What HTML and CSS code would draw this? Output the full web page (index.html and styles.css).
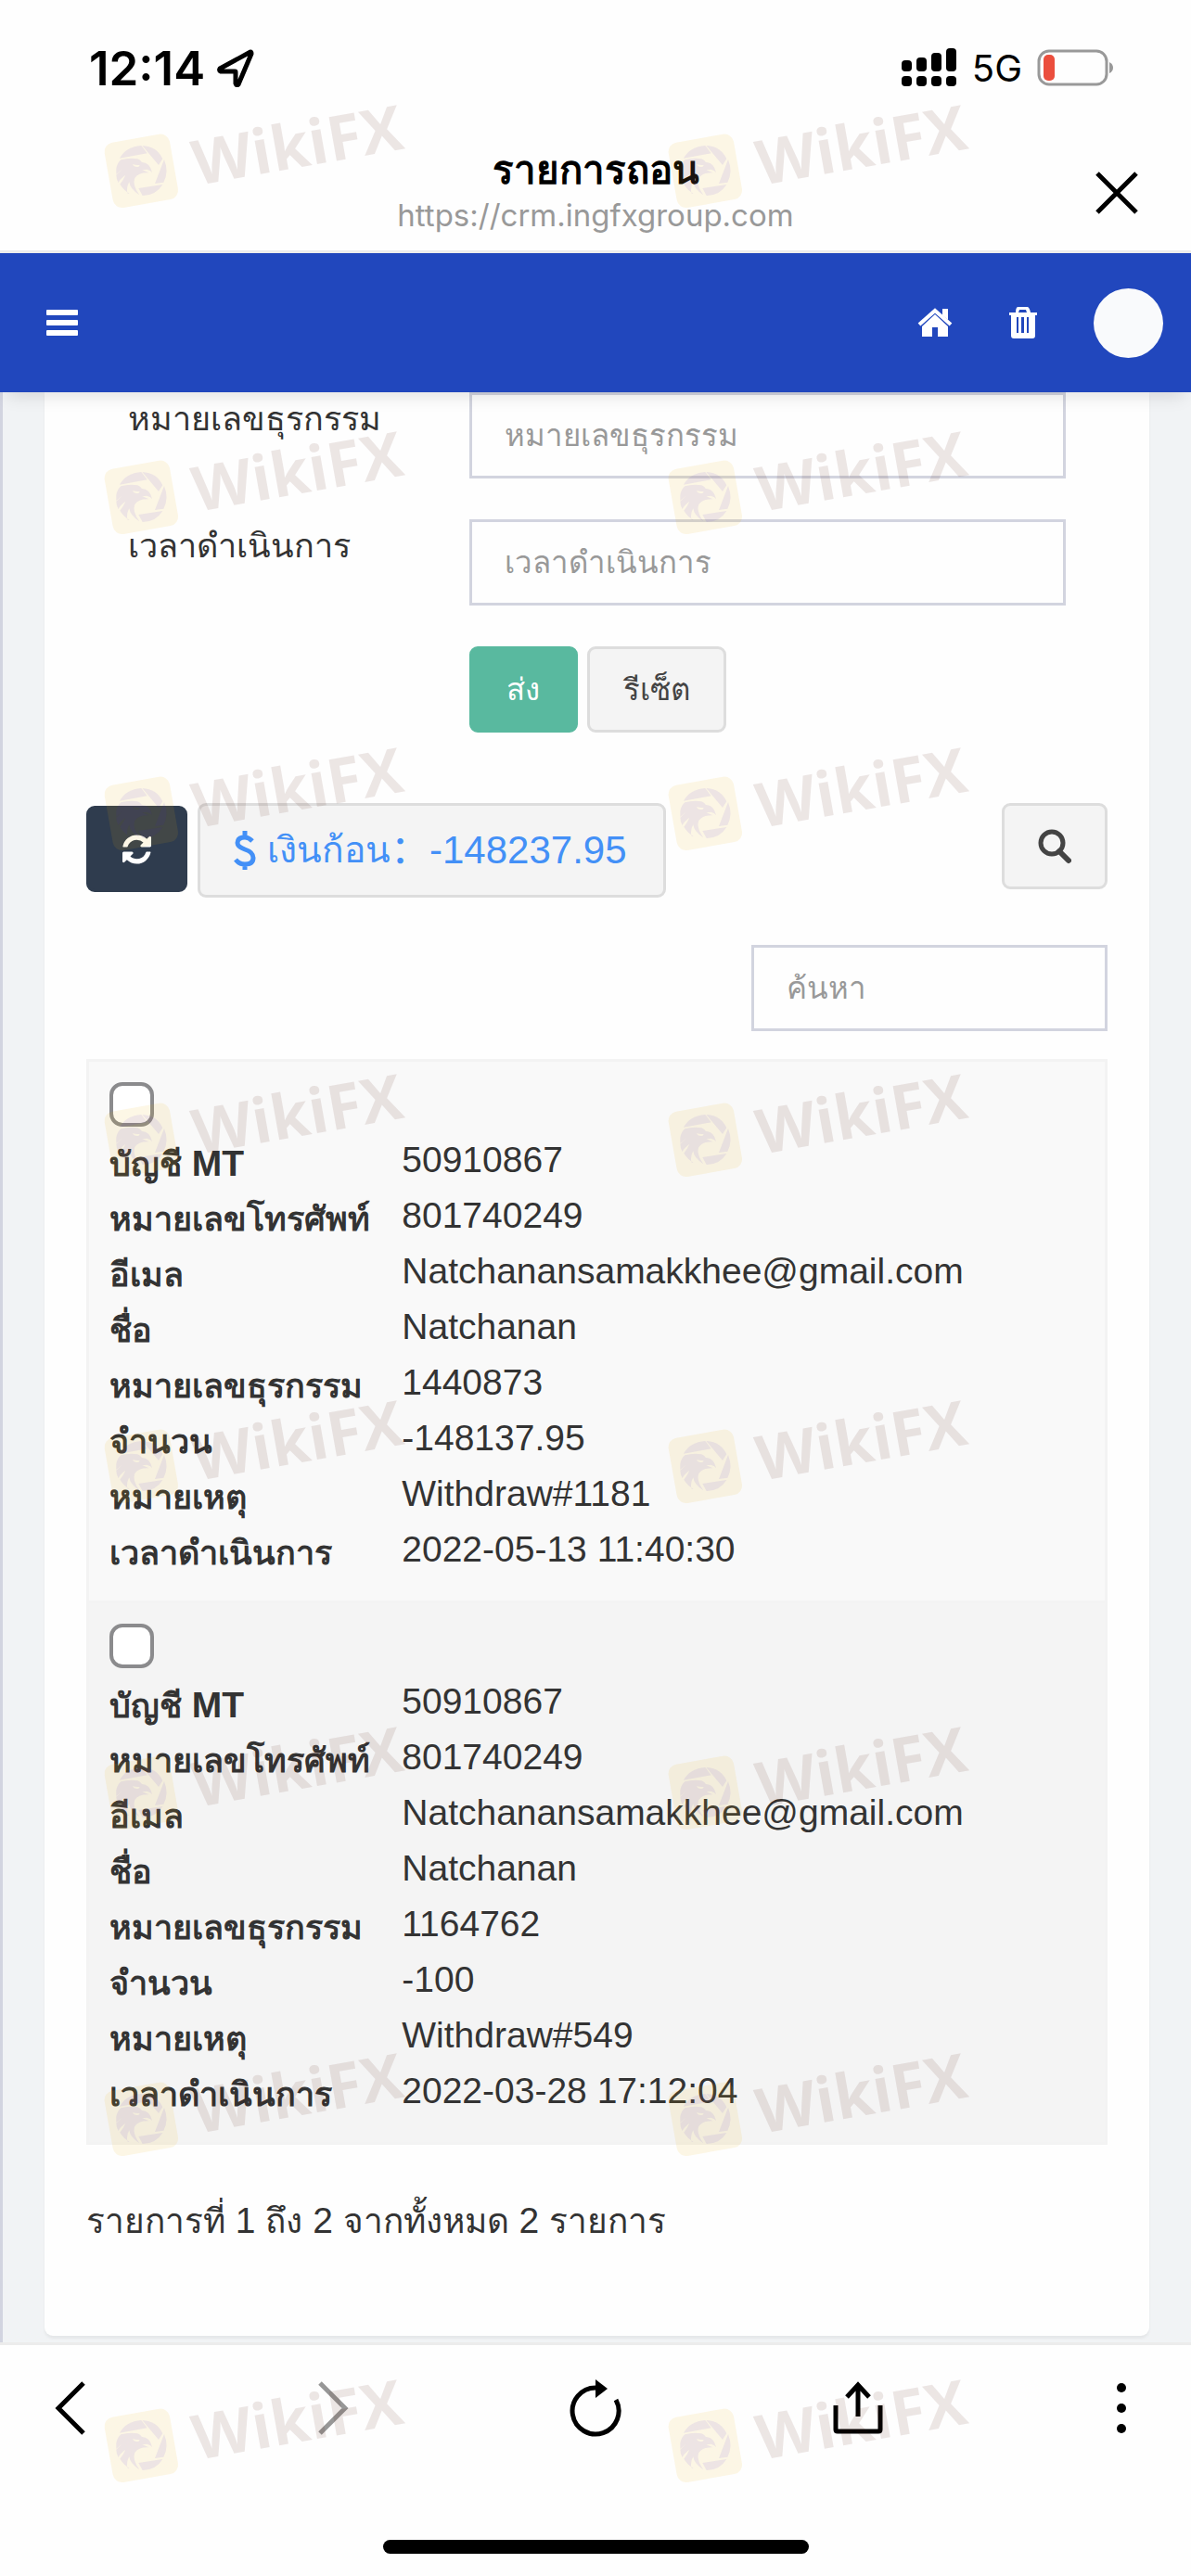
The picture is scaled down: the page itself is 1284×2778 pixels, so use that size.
FILE: index.html
```html
<!DOCTYPE html>
<html lang="th">
<head>
<meta charset="utf-8">
<meta name="viewport" content="width=device-width, initial-scale=1">
<title>รายการถอน</title>
<link rel="stylesheet" href="styles.css">
</head>
<body>
<svg class="defs" aria-hidden="true">
  <symbol id="badge" viewBox="0 0 350 140">
    <g transform="translate(10 36) scale(.3333)">
      <rect class="mark-badge" x="20" y="38" width="214" height="214" rx="30" transform="rotate(-10 127 145)"/>
      <g class="mark-bird">
        <path d="M57 104Q78 66 127 63L146 88Z"/>
        <path d="M130 63Q178 66 196 106L183 126Z"/>
        <path d="M201 108Q217 148 199 182L171 186Z"/>
        <path d="M196 189Q174 225 131 225L118 201Z"/>
        <path fill-rule="evenodd" d="M46 137Q50 118 61 109Q88 101 115 106Q124 109 129 117Q155 118 162 150Q157 142 145 140L130 142L152 151Q118 149 106 168Q97 190 121 223Q90 203 88 181Q77 200 83 218L89 218Q70 208 58 188Q70 172 76 158Q55 174 53 184Q46 170 46 158L66 139L46 156ZM99 123Q103 134 119 131L122 126Q108 127 99 123Z"/>
      </g>
    </g>
  </symbol>
</svg>

<div class="status">
  <span class="clock">12:14</span>
  <svg class="arrow" width="42" height="42" viewBox="0 0 42 42"><path d="M37 4 4 22q-1 2 1 3h15q1 0 1 1v12q1 3 3 1L38 6q0-2-1-2Z"/></svg>
  <div class="status-right">
    <svg width="60" height="42" viewBox="0 0 60 42">
      <rect x="0" y="13" width="11" height="12" rx="4"/><rect x="16" y="10" width="11" height="15" rx="4"/><rect x="32" y="5" width="11" height="20" rx="4"/><rect x="48" y="0" width="11" height="25" rx="4"/>
      <rect x="0" y="30" width="11" height="11" rx="4"/><rect x="16" y="30" width="11" height="11" rx="4"/><rect x="32" y="30" width="11" height="11" rx="4"/><rect x="48" y="30" width="11" height="11" rx="4"/>
    </svg>
    <span class="network">5G</span>
    <svg width="82" height="40" viewBox="0 0 82 40"><rect x="2" y="2" width="73" height="36" rx="11" fill="none" stroke="#999" stroke-width="3"/><rect x="7" y="6" width="12" height="28" rx="5" fill="#eb4e3d"/><path d="M78 14q4 2 4 6t-4 6Z" fill="#999"/></svg>
  </div>
</div>

<header class="browser-head">
  <div class="page-id">
    <h1>รายการถอน</h1>
    <p>https://crm.ingfxgroup.com</p>
  </div>
  <button class="close" type="button" aria-label="Close"><svg width="48" height="48" viewBox="0 0 48 48"><path d="M3 3 45 45M45 3 3 45" fill="none" stroke="#000" stroke-width="5"/></svg></button>
</header>

<nav class="appbar">
  <button type="button" aria-label="Menu"><svg width="34" height="28" viewBox="0 0 34 28"><rect width="34" height="6" rx="1"/><rect y="11" width="34" height="6" rx="1"/><rect y="22" width="34" height="6" rx="1"/></svg></button>
  <div class="appbar-right">
    <a href="#home" aria-label="Home"><svg width="38" height="32" viewBox="0 0 38 32"><path d="M19 7 33 20v11H22V21h-6v10H5V20Z"/><path d="M2 18 19 3 36 18" fill="none" stroke="#fff" stroke-width="4"/><path d="M27 1h6v12l-6-5Z"/></svg></a>
    <button type="button" aria-label="Trash"><svg width="32" height="34" viewBox="0 0 32 34"><path fill-rule="evenodd" d="M10 0h11q2 1 3 6h7v3h-2v22q0 3-3 3H6q-3 0-3-3V9H1V6h7q0-5 2-6Zm1 6h9l-1-3h-7ZM9 11v17h2V11Zm5 0v17h3V11Zm6 0v17h2V11Z"/></svg></button>
    <span class="avatar"></span>
  </div>
</nav>

<main>
  <section class="card">
    <form class="filter">
      <label for="txn">หมายเลขธุรกรรม</label>
      <input id="txn" type="text" placeholder="หมายเลขธุรกรรม">
      <label for="time">เวลาดำเนินการ</label>
      <input id="time" type="text" placeholder="เวลาดำเนินการ">
      <div class="actions">
        <button class="btn submit" type="submit">ส่ง</button>
        <button class="btn" type="reset">รีเซ็ต</button>
      </div>
    </form>

    <div class="tools">
      <button class="btn refresh" type="button" aria-label="Refresh"><svg width="31" height="36" viewBox="128 128 1536 1536"><path d="M1639 1056q0 5-1 7-64 268-268 434.500t-478 166.500q-146 0-282.500-55t-243.500-157l-129 129q-19 19-45 19t-45-19-19-45v-448q0-26 19-45t45-19h448q26 0 45 19t19 45-19 45l-137 137q71 66 161 102t187 36q134 0 250-65t186-179q11-17 53-117 8-23 30-23h192q13 0 22.500 9.500t9.500 22.500zm25-800v448q0 26-19 45t-45 19h-448q-26 0-45-19t-19-45 19-45l138-138q-148-137-349-137-134 0-250 65t-186 179q-11 17-53 117-8 23-30 23h-199q-13 0-22.500-9.500t-9.500-22.500v-7q65-268 270-434.500t480-166.500q146 0 284 55.500t245 156.500l130-129q19-19 45-19t45 19 19 45z"/></svg></button>
      <button class="btn balance" type="button"><svg width="24" height="42" viewBox="0 0 24 42"><path d="M20 11Q16 7 12 7q-8 0-8 6 0 4 8 7 9 3 9 9 0 7-9 7-6 0-10-5M12 0v7M12 35v7" fill="none" stroke="#4390f7" stroke-width="5"/></svg><span>เงินก้อน</span><span class="amount">：-148237.95</span></button>
      <button class="btn search" type="button" aria-label="Search"><svg width="36" height="38" viewBox="0 0 36 38"><circle cx="15" cy="15" r="12" fill="none" stroke="#444" stroke-width="5"/><path d="m23 24 10 10" stroke="#444" stroke-width="6" stroke-linecap="round"/></svg></button>
    </div>
    <input class="find" type="search" aria-label="ค้นหา" placeholder="ค้นหา">

    <table class="records">
      <tbody>
      <tr><td>
        <input type="checkbox" aria-label="50910867 1440873">
        <dl>
          <dt>บัญชี<span> MT</span></dt><dd>50910867</dd>
          <dt>หมายเลขโทรศัพท์</dt><dd>801740249</dd>
          <dt>อีเมล</dt><dd>Natchanansamakkhee@gmail.com</dd>
          <dt>ชื่อ</dt><dd>Natchanan</dd>
          <dt>หมายเลขธุรกรรม</dt><dd>1440873</dd>
          <dt>จำนวน</dt><dd>-148137.95</dd>
          <dt>หมายเหตุ</dt><dd>Withdraw#1181</dd>
          <dt>เวลาดำเนินการ</dt><dd>2022-05-13 11:40:30</dd>
        </dl>
      </td></tr>
      <tr><td>
        <input type="checkbox" aria-label="50910867 1164762">
        <dl>
          <dt>บัญชี<span> MT</span></dt><dd>50910867</dd>
          <dt>หมายเลขโทรศัพท์</dt><dd>801740249</dd>
          <dt>อีเมล</dt><dd>Natchanansamakkhee@gmail.com</dd>
          <dt>ชื่อ</dt><dd>Natchanan</dd>
          <dt>หมายเลขธุรกรรม</dt><dd>1164762</dd>
          <dt>จำนวน</dt><dd>-100</dd>
          <dt>หมายเหตุ</dt><dd>Withdraw#549</dd>
          <dt>เวลาดำเนินการ</dt><dd>2022-03-28 17:12:04</dd>
        </dl>
      </td></tr>
      </tbody>
    </table>
    <p class="summary">รายการที่<span> 1 </span>ถึง<span> 2 </span>จากทั้งหมด<span> 2 </span>รายการ</p>
  </section>
</main>

<footer class="browser-foot">
  <div class="controls">
    <button type="button" aria-label="Back"><svg width="64" height="64" viewBox="0 0 64 64"><path d="M46 4 19 31l27 27" /></svg></button>
    <button type="button" aria-label="Forward" disabled><svg width="64" height="64" viewBox="0 0 64 64"><path d="m18 4 27 27-27 27"/></svg></button>
    <button type="button" aria-label="Reload"><svg width="64" height="64" viewBox="0 0 64 64"><path d="M32 9a25 25 0 1 0 22 13"/><path class="solid" d="M32 0v20l13-10Z"/></svg></button>
    <button type="button" aria-label="Share"><svg width="64" height="64" viewBox="0 0 64 64"><path d="M8 28v26q0 2 2 2h44q2 0 2-2V28M32 40V6M20 19 32 6l12 13"/></svg></button>
    <button type="button" aria-label="More"><svg width="64" height="64" viewBox="0 0 64 64"><circle class="solid" cx="33" cy="9" r="5"/><circle class="solid" cx="33" cy="31" r="5"/><circle class="solid" cx="33" cy="53" r="5"/></svg></button>
  </div>
  <div class="home-bar"></div>
</footer>

<div class="marks" aria-hidden="true">
  <svg viewBox="0 -60 400 240"><use href="#badge" width="350" height="140"/><text transform="translate(112 100) rotate(-10)">WikiFX</text></svg>
  <svg viewBox="0 -60 400 240"><use href="#badge" width="350" height="140"/><text transform="translate(112 100) rotate(-10)">WikiFX</text></svg>
  <svg viewBox="0 -60 400 240"><use href="#badge" width="350" height="140"/><text transform="translate(112 100) rotate(-10)">WikiFX</text></svg>
  <svg viewBox="0 -60 400 240"><use href="#badge" width="350" height="140"/><text transform="translate(112 100) rotate(-10)">WikiFX</text></svg>
  <svg viewBox="0 -60 400 240"><use href="#badge" width="350" height="140"/><text transform="translate(112 100) rotate(-10)">WikiFX</text></svg>
  <svg viewBox="0 -60 400 240"><use href="#badge" width="350" height="140"/><text transform="translate(112 100) rotate(-10)">WikiFX</text></svg>
  <svg viewBox="0 -60 400 240"><use href="#badge" width="350" height="140"/><text transform="translate(112 100) rotate(-10)">WikiFX</text></svg>
  <svg viewBox="0 -60 400 240"><use href="#badge" width="350" height="140"/><text transform="translate(112 100) rotate(-10)">WikiFX</text></svg>
  <svg viewBox="0 -60 400 240"><use href="#badge" width="350" height="140"/><text transform="translate(112 100) rotate(-10)">WikiFX</text></svg>
  <svg viewBox="0 -60 400 240"><use href="#badge" width="350" height="140"/><text transform="translate(112 100) rotate(-10)">WikiFX</text></svg>
  <svg viewBox="0 -60 400 240"><use href="#badge" width="350" height="140"/><text transform="translate(112 100) rotate(-10)">WikiFX</text></svg>
  <svg viewBox="0 -60 400 240"><use href="#badge" width="350" height="140"/><text transform="translate(112 100) rotate(-10)">WikiFX</text></svg>
  <svg viewBox="0 -60 400 240"><use href="#badge" width="350" height="140"/><text transform="translate(112 100) rotate(-10)">WikiFX</text></svg>
  <svg viewBox="0 -60 400 240"><use href="#badge" width="350" height="140"/><text transform="translate(112 100) rotate(-10)">WikiFX</text></svg>
  <svg viewBox="0 -60 400 240"><use href="#badge" width="350" height="140"/><text transform="translate(112 100) rotate(-10)">WikiFX</text></svg>
  <svg viewBox="0 -60 400 240"><use href="#badge" width="350" height="140"/><text transform="translate(112 100) rotate(-10)">WikiFX</text></svg>
</div>
</body>
</html>
```
FILE: styles.css
```css
* { box-sizing: border-box; }

body {
  margin: 0;
  position: relative;
  min-height: 100vh;
  display: flex;
  flex-direction: column;
  background: #fefefe;
  color: #333;
  font-family: "Liberation Sans", "Noto Sans CJK SC", sans-serif;
  font-size: 36px;
}

h1, p, dl, dd { margin: 0; }
svg { display: block; }
button { padding: 0; border: 0; background: none; font: inherit; color: inherit; }
.defs { position: absolute; width: 0; height: 0; }

/* Phone status bar */
.status {
  display: flex;
  align-items: center;
  height: 146px;
  padding: 0 84px 0 96px;
  color: #000;
  font-family: Inter, sans-serif;
}
.clock { font-size: 51px; font-weight: 600; }
.arrow { margin-left: 12px; fill: none; stroke: #000; stroke-width: 5; stroke-linejoin: round; }
.status-right { display: flex; align-items: center; gap: 16px; margin-left: auto; }
.network { font-size: 40px; }

/* Browser heading */
.browser-head {
  display: grid;
  grid-template-columns: 1fr auto 1fr;
  align-items: center;
  height: 127px;
  padding: 0 56px;
  border-bottom: 3px solid #ececec;
}
.page-id { grid-column: 2; text-align: center; }
.page-id h1 { color: #000; font-size: 42px; line-height: 48px; }
.page-id p { color: #999; font: 33px/48px Inter, sans-serif; }
.close { justify-self: end; }

/* Application bar */
.appbar {
  position: relative;
  display: flex;
  align-items: center;
  justify-content: space-between;
  height: 150px;
  padding: 0 30px 0 50px;
  background: #2147bd;
  box-shadow: 0 12px 18px -8px rgba(0, 0, 0, .12);
  fill: #fff;
}
.appbar-right { display: flex; align-items: center; }
.appbar-right button { margin: 0 60px; }
.avatar { width: 75px; height: 75px; border-radius: 50%; background: #f9fafc; }

main {
  flex: 1;
  padding: 0 45px 7px;
  border-left: 3px solid #d2d4e0;
  background: #f1f3f5;
}
.card {
  padding: 0 45px 93px;
  border-radius: 0 0 9px 9px;
  background: #fefefe;
  box-shadow: 0 3px 3px rgba(0, 0, 0, .05);
}

/* Filter form */
.filter {
  display: grid;
  grid-template-columns: 4fr 7fr;
  gap: 44px 0;
  padding: 0 45px;
}
.filter label { line-height: 58px; }
.filter input, .find {
  min-width: 0;
  height: 93px;
  padding: 0 35px;
  border: 3px solid #d2d4df;
  border-radius: 0;
  background: #fefefe;
  font: inherit;
  font-size: 33px;
}
::placeholder { color: #999; opacity: 1; }
.actions { grid-column: 2; display: flex; gap: 10px; }
.btn {
  height: 93px;
  padding: 0 36px;
  border: 3px solid #ddd;
  border-radius: 9px;
  background: #f4f4f4;
  color: #444;
  font-size: 33px;
  line-height: 60px;
}
.submit { min-width: 117px; border-color: #59b99f; background: #59b99f; color: #fff; }

/* Table toolbar */
.tools { display: flex; align-items: flex-start; gap: 11px; margin-top: 76px; }
.refresh { margin-top: 3px; border-color: #2f3c4e; background: #2f3c4e; fill: #fff; }
.balance {
  display: flex;
  align-items: center;
  min-width: 505px;
  height: 102px;
  color: #4390f7;
  font-size: 39px;
}
.balance svg { margin-right: 12px; }
.amount { font-size: 42px; }
.search { margin-left: auto; }
.find { display: block; width: 384px; margin: 51px 0 30px auto; }

/* Records */
.records { width: 100%; border-collapse: collapse; }
.records td { padding: 22px 22px 25px; border: 3px solid #f3f3f3; background: #f9f9f9; }
.records tr:nth-child(even) td { background: #f4f4f4; }
.records input {
  appearance: none;
  display: block;
  width: 48px;
  height: 48px;
  margin: 0 0 6px;
  border: 4px solid #8b8b8d;
  border-radius: 14px;
  background: #fff;
}
.records dl { display: grid; grid-template-columns: 3fr 7fr; grid-auto-rows: 60px; }
.records dt { font-weight: 700; line-height: 68px; white-space: nowrap; }
.records dt span, .records dd, .summary span { font-size: 39px; }
.records dd { line-height: 60px; }
.summary { margin-top: 52px; font-size: 37px; line-height: 60px; }

/* Browser controls */
.browser-foot { padding-bottom: 24px; border-top: 3px solid #ececec; }
.controls { display: flex; align-items: center; justify-content: space-between; height: 138px; padding: 0 44px; }
.controls svg { fill: none; stroke: #000; stroke-width: 5; }
.controls .solid { fill: #000; stroke: none; }
.controls :disabled { opacity: .4; }
.home-bar { width: 459px; height: 15px; margin: 72px auto 0; border-radius: 8px; background: #000; }

/* Repeated brand marks laid over the page */
.marks {
  position: absolute;
  top: 40px;
  left: 100px;
  display: grid;
  grid-template-columns: 608px 400px;
  grid-template-rows: 352px 341px;
  grid-auto-rows: 352px;
  height: 2700px;
  pointer-events: none;
}
.marks svg { width: 400px; height: 240px; }
.marks text {
  fill: #4b1400;
  fill-opacity: .1;
  font: 700 67px "Open Sans", sans-serif;
}
.mark-badge { fill: rgba(235, 175, 5, .1); }
.mark-bird { fill: rgba(70, 30, 220, .08); }
```
